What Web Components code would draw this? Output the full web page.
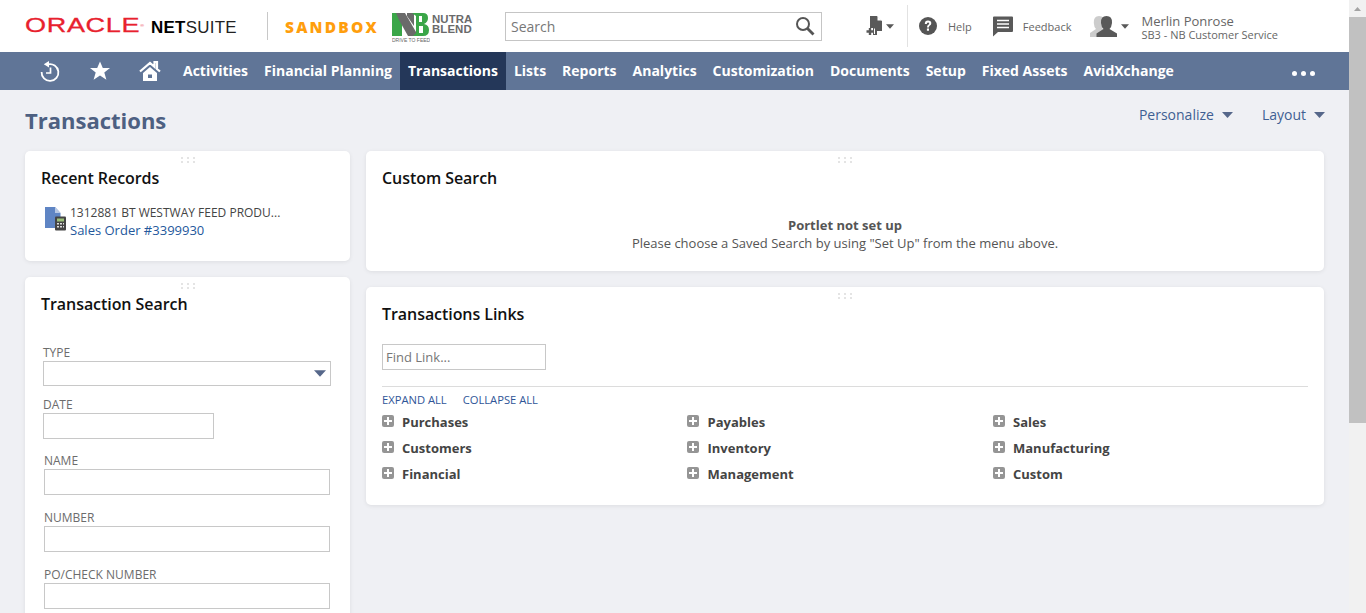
<!DOCTYPE html>
<html lang="en"><head><meta charset="utf-8"><title>Transactions</title>
<style>
html,body{margin:0;height:613px;overflow:hidden;background:#eff0f4;font-family:"Open Sans",sans-serif}
body{display:flex}
ns-app{flex:1;min-width:0}
</style></head><body>
<ns-app>
  <ns-header></ns-header>
  <ns-nav></ns-nav>
  <ns-title></ns-title>
  <ns-dashboard>
    <ns-card slot="left" title="Recent Records" h="110"><ns-recent></ns-recent></ns-card>
    <ns-card slot="left" title="Transaction Search" h="400"><ns-search-form></ns-search-form></ns-card>
    <ns-card slot="right" title="Custom Search" h="120"><ns-empty></ns-empty></ns-card>
    <ns-card slot="right" title="Transactions Links" h="218"><ns-links></ns-links></ns-card>
  </ns-dashboard>
</ns-app>
<ns-scrollbar></ns-scrollbar>
<script>
function def(name,html){
  customElements.define(name,class extends HTMLElement{
    connectedCallback(){
      if(this.shadowRoot)return;
      this.attachShadow({mode:'open'}).innerHTML=html;
    }
  });
}
const caret=(c,w=11,h=6)=>`<svg width="${w}" height="${h}" viewBox="0 0 11 6"><path d="M0 0H11L5.5 6Z" fill="${c}"/></svg>`;

def('ns-app',`<style>:host{display:block;height:613px;overflow:hidden}</style><slot></slot>`);

def('ns-header',`<style>
:host{display:block;height:52px;background:#fff;color:#555}
.bar{display:flex;align-items:center;height:52px}
.oracle{margin-left:25px;width:120px;flex:none;color:#e8212e;font:400 21.5px/20px "Liberation Sans",sans-serif;letter-spacing:.5px;transform:scale(1.26,.92);transform-origin:0 50%;white-space:nowrap;margin-top:-1px;-webkit-text-stroke:.3px #e8212e}
.reg{font-size:4px;vertical-align:top;letter-spacing:0;-webkit-text-stroke:0}
.ns{margin-left:6px;width:116px;flex:none;font:400 16.9px/20px "Liberation Sans",sans-serif;letter-spacing:.3px;color:#222;white-space:nowrap;margin-top:3px}
.ns b{color:#000;font-weight:700}
.div{width:1px;height:28px;background:#c8c8c8;flex:none}
.sand{margin-left:17px;width:93px;flex:none;color:#ff9e0d;font:800 15.5px/20px "Open Sans",sans-serif;letter-spacing:2.2px;white-space:nowrap;margin-top:2px}
.logo{margin-left:14px;width:38px;height:30px;display:block;flex:none;margin-top:1px}
.nb{margin-left:2px;width:73px;flex:none;font:700 11.4px/10.5px "Liberation Sans",sans-serif;letter-spacing:.1px;color:#6a6a6a;margin-top:-4px;box-sizing:border-box}
.search{width:317px;height:29px;flex:none;border:1px solid #c5c5c5;display:flex;align-items:center;justify-content:space-between;color:#777;font-size:14px;padding-left:5px;box-sizing:border-box}
.search svg{margin-right:6px}
.act{margin-left:44px;display:flex;align-items:center;gap:3px;width:28px;flex:none}
.vr{width:1px;height:42px;background:#e2e2e2;margin-left:13px;flex:none}
.help{margin-left:11px;display:flex;align-items:center;gap:11px;font-size:11px;color:#666}
.fb{margin-left:20px;display:flex;align-items:center;gap:9px;font-size:11px;color:#666}
.user{margin-left:19px;display:flex;align-items:center}
.nm{margin-left:12px;margin-top:2px;color:#666}
.nm div:first-child{font-size:13px;line-height:14px}
.nm div:last-child{font-size:11px;line-height:13px}
</style>
<div class="bar">
<div class="oracle">ORACLE<span class="reg">®</span></div>
<div class="ns"><b>NET</b>SUITE</div>
<div class="div"></div>
<div class="sand">SANDBOX</div>
<svg class="logo" viewBox="0 0 38 30"><path d="M0 1H6L6 2H10V24H0Z" fill="#3aa648"/><path d="M4 1H13L24 20V24H16L7 8Z" fill="#6a6a6a"/><path d="M15 1H22V14L15 4Z" fill="#6a6a6a"/><path d="M20 1H31Q36 1 36 6Q36 10 32 12Q37 13 37 18Q37 24 31 24H21L24 21V4Z" fill="#3aa648"/><path d="M27 4H30V10H27ZM27 14H31V21H27Z" fill="#fff"/><text x="0" y="29.5" font-family="Liberation Sans" font-size="5" fill="#666">DRIVE TO FEED</text></svg>
<div class="nb">NUTRA<br>BLEND</div>
<div class="search"><span>Search</span><svg width="20" height="20" viewBox="0 0 20 20" fill="none" stroke="#555" stroke-width="2"><circle cx="8" cy="8" r="6"/><path d="M12.5 12.5L18.5 18.5" stroke-width="2.8"/></svg></div>
<div class="act"><svg width="17" height="20" viewBox="0 0 17 20"><path d="M4 0H11L16 5V15H11V19H7V12H4Z" fill="#595959"/><path d="M11.500 0L16 4.500H11.500Z" fill="#fff"/><path d="M4 12V19M0.500 15.500H8" stroke="#595959" stroke-width="2.4"/><path d="M8 12.500H9V18H8Z" fill="#fff"/></svg>${caret('#595959',8,5)}</div>
<div class="vr"></div>
<div class="help"><svg width="18" height="18" viewBox="0 0 18 18"><circle cx="9" cy="9" r="9" fill="#555"/><path d="M5.8 7Q5.8 3.6 9 3.6Q12.3 3.6 12.3 6.3Q12.3 7.9 10.6 8.8Q9.9 9.2 9.9 10.6H8Q8 8.4 9.3 7.7Q10.2 7.2 10.2 6.4Q10.2 5.5 9 5.5Q7.8 5.5 7.8 7ZM7.9 11.5H10V13.8H7.9Z" fill="#fff"/></svg><span>Help</span></div>
<div class="fb"><svg width="22" height="21" viewBox="0 0 22 21"><path d="M1 1.500Q1 .5 2 .5H20Q21 .5 21 1.500V15Q21 16 20 16H6L1 20.500Z" fill="#595959"/><path d="M5 4.500H17M5 8H17M5 11.500H17" stroke="#fff" stroke-width="1.6"/></svg><span>Feedback</span></div>
<div class="user"><svg width="28" height="23" viewBox="0 0 28 23"><path d="M9 1Q15 1 14.500 8Q14 12 12 13L18 19V22H0V18L6 14Q4 12 3.800 8Q3.500 1 9 1Z" fill="#ccc"/><path d="M16.500 1Q22.500 1 22 8Q21.600 12 19.500 14L27 18.500V22H6.500V18.500L13.500 14Q11.400 12 11 8Q10.500 1 16.500 1Z" fill="#595959"/></svg><span style="margin-left:3px;display:flex">${caret('#595959',8,5)}</span>
<div class="nm"><div>Merlin Ponrose</div><div>SB3 - NB Customer Service</div></div></div>
</div>`);

const items=['Activities','Financial Planning','Transactions','Lists','Reports','Analytics','Customization','Documents','Setup','Fixed Assets','AvidXchange'];
def('ns-nav',`<style>
:host{display:block;height:38px;background:#607597;color:#fff}
.n{display:flex;height:38px;align-items:center;padding-left:40px}
svg{flex:none}
a{display:block;height:38px;padding:0 8px;font-weight:700;font-size:14px;line-height:37px;box-sizing:border-box;color:#fff;white-space:nowrap}
a.on{background:#243759}
.dots{margin-left:auto;margin-right:34px;display:flex;gap:4px;margin-top:4px}
.dots i{width:5px;height:5px;border-radius:50%;background:#fff}
</style><div class="n">
<svg width="20" height="21" viewBox="0 0 20 21" fill="none" stroke="#fff"><path d="M8 3.300A8.400 8.400 0 1 1 1.600 11" stroke-width="1.800"/><path d="M9 0V6.500L3.800 3.300Z" stroke="none" fill="#fff"/><path d="M10.500 6.500V12H6" stroke-width="1.700"/></svg>
<svg style="margin-left:30px" width="20" height="20" viewBox="0 0 20 20"><path d="M10 .5L12.800 7H20L14.300 11.400L16.400 18.800L10 14.600L3.600 18.800L5.700 11.400L0 7H7.200Z" fill="#fff"/></svg>
<svg style="margin-left:29px" width="22" height="20" viewBox="0 0 22 20"><path d="M1 10.500L11 2L15.500 5.800V1H18V8L21 10.500" fill="none" stroke="#fff" stroke-width="2.200"/><path d="M4 12L11 6L18 12V20H4Z M9 13.500V17H13V13.500Z" fill="#fff" fill-rule="evenodd"/></svg>
<span style="width:14px;flex:none"></span>
${items.map(t=>`<a class="${t==='Transactions'?'on':''}">${t}</a>`).join('')}
<div class="dots"><i></i><i></i><i></i></div>
</div>`);

def('ns-title',`<style>
:host{display:flex;justify-content:space-between;align-items:flex-start;height:61px;padding:0 24px 0 25px;box-sizing:border-box}
h1{margin:15px 0 0;font-size:22px;line-height:30px;font-weight:700;color:#4d6082}
.m{display:flex;gap:29px;margin-top:15px;font-size:14px;line-height:20px;color:#3f5f93}
.m span{display:flex;align-items:center;gap:8px}
</style><h1>Transactions</h1><div class="m"><span>Personalize ${caret('#56678a')}</span><span>Layout ${caret('#56678a')}</span></div>`);

def('ns-dashboard',`<style>
:host{display:flex;gap:16px;padding:0 25px}
.l{width:325px;display:flex;flex-direction:column;gap:16px;flex:none}
.r{width:958px;display:flex;flex-direction:column;gap:16px;flex:none}
</style><div class="l"><slot name="left"></slot></div><div class="r"><slot name="right"></slot></div>`);

customElements.define('ns-card',class extends HTMLElement{
  connectedCallback(){
    if(this.shadowRoot)return;
    this.attachShadow({mode:'open'}).innerHTML=`<style>
:host{display:block;background:#fff;border-radius:5px;box-shadow:0 1px 4px rgba(0,0,0,.08);height:${this.getAttribute('h')}px;box-sizing:border-box;padding:0 16px;position:relative;flex:none}
.g{position:absolute;top:6px;left:50%;margin-left:-7px;display:grid;grid-template-columns:repeat(3,2px);grid-auto-rows:2px;gap:2px 4px}
.g i{background:#e4e4e4}
h2{margin:0;padding-top:15px;font-size:16px;line-height:24px;font-weight:600;color:#111;letter-spacing:-.06px}
</style><div class="g"><i></i><i></i><i></i><i></i><i></i><i></i></div><h2>${this.getAttribute('title')}</h2><slot></slot>`;
  }
});

def('ns-recent',`<style>
:host{display:flex;padding:14px 0 0 4px;font-size:12px;line-height:18px;color:#444}
svg{margin:2px 4px 0 0;flex:none}
a{color:#24589c;display:block;font-size:13px;margin-top:-1px}
</style><svg width="21" height="25" viewBox="0 0 21 25"><path d="M0 1H10L15.500 7V22H0Z" fill="#5f85c4"/><path d="M10 1L15.500 7H10Z" fill="#b7c8e4"/><rect x="10" y="10.500" width="11" height="14" rx="1" fill="#444"/><rect x="12" y="12.500" width="7" height="3" fill="#9cc07a"/><path d="M12 17H14V18.500H12ZM15 17H17V18.500H15ZM18 17H19V18.500H18ZM12 20H14V21.500H12ZM15 20H17V21.500H15ZM18 20H19V21.500H18Z" fill="#ddd"/></svg>
<div><div>1312881 BT WESTWAY FEED PRODU...</div><a>Sales Order #3399930</a></div>`);

def('ns-search-form',`<style>
:host{display:block;font-size:12px;color:#6c6c6c}
label{display:block;line-height:16px}
.box{border:1px solid #c8c8c8;box-sizing:border-box;background:#fff}
.sel{margin:0 3px 11px 2px;height:25px;display:flex;align-items:center;justify-content:flex-end;padding-right:4px}
.date{margin:0 0 14px 2px;width:171px;height:26px}
.in{margin:0 4px 15px 3px;height:26px}
.pad{margin-left:3px}
.two{margin-left:2px}
</style>
<div style="height:29px"></div>
<label class="two">TYPE</label><div class="box sel">${caret('#56678a',12,7)}</div>
<label class="two">DATE</label><div class="box date"></div>
<label class="pad">NAME</label><div class="box in"></div>
<label class="pad">NUMBER</label><div class="box in"></div>
<label class="pad">PO/CHECK NUMBER</label><div class="box in"></div>`);

def('ns-empty',`<style>
:host{display:block;text-align:center;font-size:13px;line-height:18px;color:#555;padding-top:26px}
b{font-weight:700;display:block}
</style><b>Portlet not set up</b><div>Please choose a Saved Search by using "Set Up" from the menu above.</div>`);

const groups=['Purchases','Payables','Sales','Customers','Inventory','Manufacturing','Financial','Management','Custom'];
def('ns-links',`<style>
:host{display:block;font-size:13px;color:#444}
.find{margin-top:18px;width:164px;height:26px;border:1px solid #c8c8c8;box-sizing:border-box;padding-left:3px;font-size:13px;line-height:24px;color:#777}
hr{margin:16px 0 0;border:0;border-top:1px solid #dcdcdc}
.ea{margin-top:6px;height:14px;display:flex;gap:16px;font-size:11.200px;line-height:14px;color:#2f5597}
.g{display:grid;grid-template-columns:305.500px 305.500px 1fr;grid-auto-rows:26px;margin-top:2px}
.i{display:flex;align-items:center;gap:8px;font-weight:700;height:26px;color:#444}
.i:nth-child(3n+2) .p{margin-left:-1px;margin-right:1px}
.p{width:12px;height:12px;border-radius:2px;background:#959595;position:relative;margin-top:-3px;flex:none}
.p:before,.p:after{content:"";position:absolute;background:#fff}
.p:before{left:2px;right:2px;top:5px;height:2px}
.p:after{top:2px;bottom:2px;left:5px;width:2px}
</style><div class="find">Find Link...</div><hr>
<div class="ea"><span>EXPAND ALL</span><span>COLLAPSE ALL</span></div>
<div class="g">${groups.map(t=>`<div class="i"><span class="p"></span>${t}</div>`).join('')}</div>`);

def('ns-scrollbar',`<style>
:host{display:flex;flex-direction:column;flex:none;width:17px;height:613px;background:#f1f1f1}
.u{height:17px;display:flex;align-items:center;justify-content:center}
.t{height:406px;background:#c1c1c1}
</style><div class="u"><svg width="7" height="4" viewBox="0 0 7 4"><path d="M3.500 0L7 4H0Z" fill="#a3a3a3"/></svg></div><div class="t"></div>`);
</script>
</body></html>
